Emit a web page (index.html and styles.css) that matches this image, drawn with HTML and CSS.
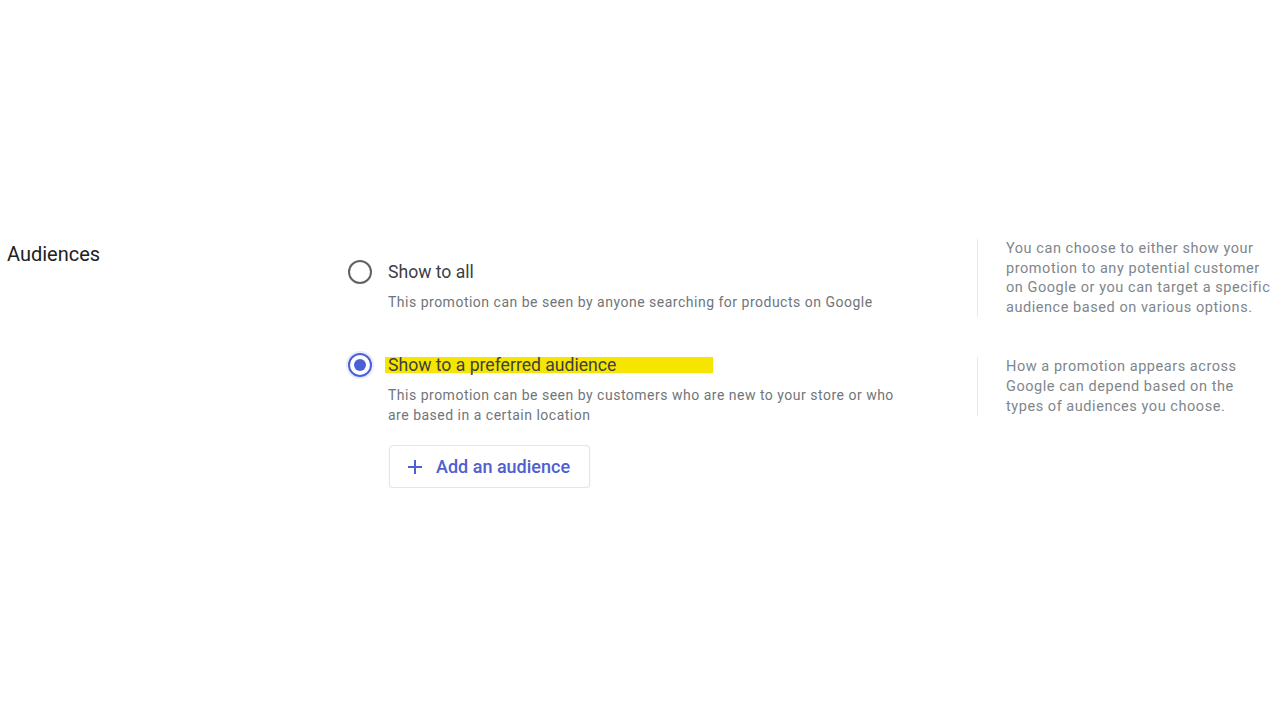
FILE: index.html
```html
<!DOCTYPE html>
<html lang="en">
<head>
<meta charset="utf-8">
<title>Audiences</title>
<link rel="stylesheet" href="styles.css">
</head>
<body>
<section class="audiences">
  <h2 class="label">Audiences</h2>

  <div class="option option-first">
    <div class="option-head">
      <span class="radio"></span>
      <span class="option-title">Show to all</span>
    </div>
    <p class="option-desc">This promotion can be seen by anyone searching for products on Google</p>
  </div>
  <aside class="help help-first">You can choose to either show your promotion to any potential customer on Google or you can target a specific audience based on various options.</aside>

  <div class="option option-second">
    <div class="option-head">
      <span class="radio radio-checked"></span>
      <span class="option-title"><mark class="hl">Show to a preferred audience</mark></span>
    </div>
    <p class="option-desc">This promotion can be seen by customers who are new to your store or who are based in a certain location</p>
    <button class="add-btn" type="button">
      <svg class="plus" viewBox="0 0 16 16" width="16" height="16" aria-hidden="true"><path d="M8 1v14M1 8h14" stroke="currentColor" stroke-width="2" fill="none"/></svg>
      <span>Add an audience</span>
    </button>
  </div>
  <aside class="help help-second">How a promotion appears across Google can depend based on the types of audiences you choose.</aside>
</section>
</body>
</html>
```

FILE: styles.css
```css
html, body {
  margin: 0;
  padding: 0;
  background: #ffffff;
}

body {
  font-family: Roboto, "Liberation Sans", Arial, sans-serif;
  color: #3c4043;
}

.audiences {
  display: grid;
  grid-template-columns: 348px 629px 1fr;
  grid-template-rows: auto auto;
  column-gap: 0;
  row-gap: 36px;
  padding-top: 239px;
}

.label {
  grid-column: 1;
  grid-row: 1;
  margin: 2px 0 0 7px;
  font-size: 20px;
  font-weight: 400;
  line-height: 26px;
  color: #202124;
}

.option {
  grid-column: 2;
}

.option-first {
  grid-row: 1;
  padding-top: 21px;
}

.option-second {
  grid-row: 2;
}

.option-head {
  display: flex;
  align-items: center;
  gap: 16px;
  height: 24px;
}

.radio {
  box-sizing: border-box;
  width: 24px;
  height: 24px;
  border: 2px solid #5f6368;
  border-radius: 50%;
  flex: none;
  display: flex;
  align-items: center;
  justify-content: center;
}

.radio-checked {
  border-color: #4b5fd6;
  box-shadow: 0 0 0 2px rgba(75, 95, 214, 0.12);
}

.radio-checked::after {
  content: "";
  width: 12px;
  height: 12px;
  border-radius: 50%;
  background: #4b5fd6;
}

.option-title {
  font-size: 17.6px;
  line-height: 24px;
  color: #3c4043;
}

.hl {
  color: #3c4043;
  padding: 0 97px 0 3px;
  margin-left: -3px;
  background-color: transparent;
  background-image: linear-gradient(#f6e500, #f6e500);
  background-repeat: no-repeat;
  background-size: 100% 16px;
  background-position: 0 45%;
}

.option-desc {
  margin: 8px 0 0 40px;
  font-size: 14px;
  line-height: 20px;
  letter-spacing: 0.5px;
  color: #70757a;
  max-width: 515px;
}

.help {
  grid-column: 3;
  box-sizing: border-box;
  border-left: 1px solid #e8eaed;
  padding-left: 28px;
  width: 296px;
  font-size: 14.5px;
  line-height: 19.6px;
  letter-spacing: 0.55px;
  color: #80868b;
}

.help-first {
  grid-row: 1;
  align-self: start;
}

.help-second {
  grid-row: 2;
  align-self: start;
  margin-top: 4px;
}

.add-btn {
  display: inline-flex;
  align-items: center;
  gap: 13px;
  margin: 20px 0 0 41px;
  height: 43px;
  padding: 0 19px 0 17px;
  background: #ffffff;
  border: 1px solid #e3e5e8;
  border-radius: 4px;
  box-shadow: 0 1px 2px rgba(60, 64, 67, 0.08);
  font-family: inherit;
  font-size: 18px;
  font-weight: 500;
  color: #5060d0;
  cursor: pointer;
}

.plus {
  display: block;
}
```
